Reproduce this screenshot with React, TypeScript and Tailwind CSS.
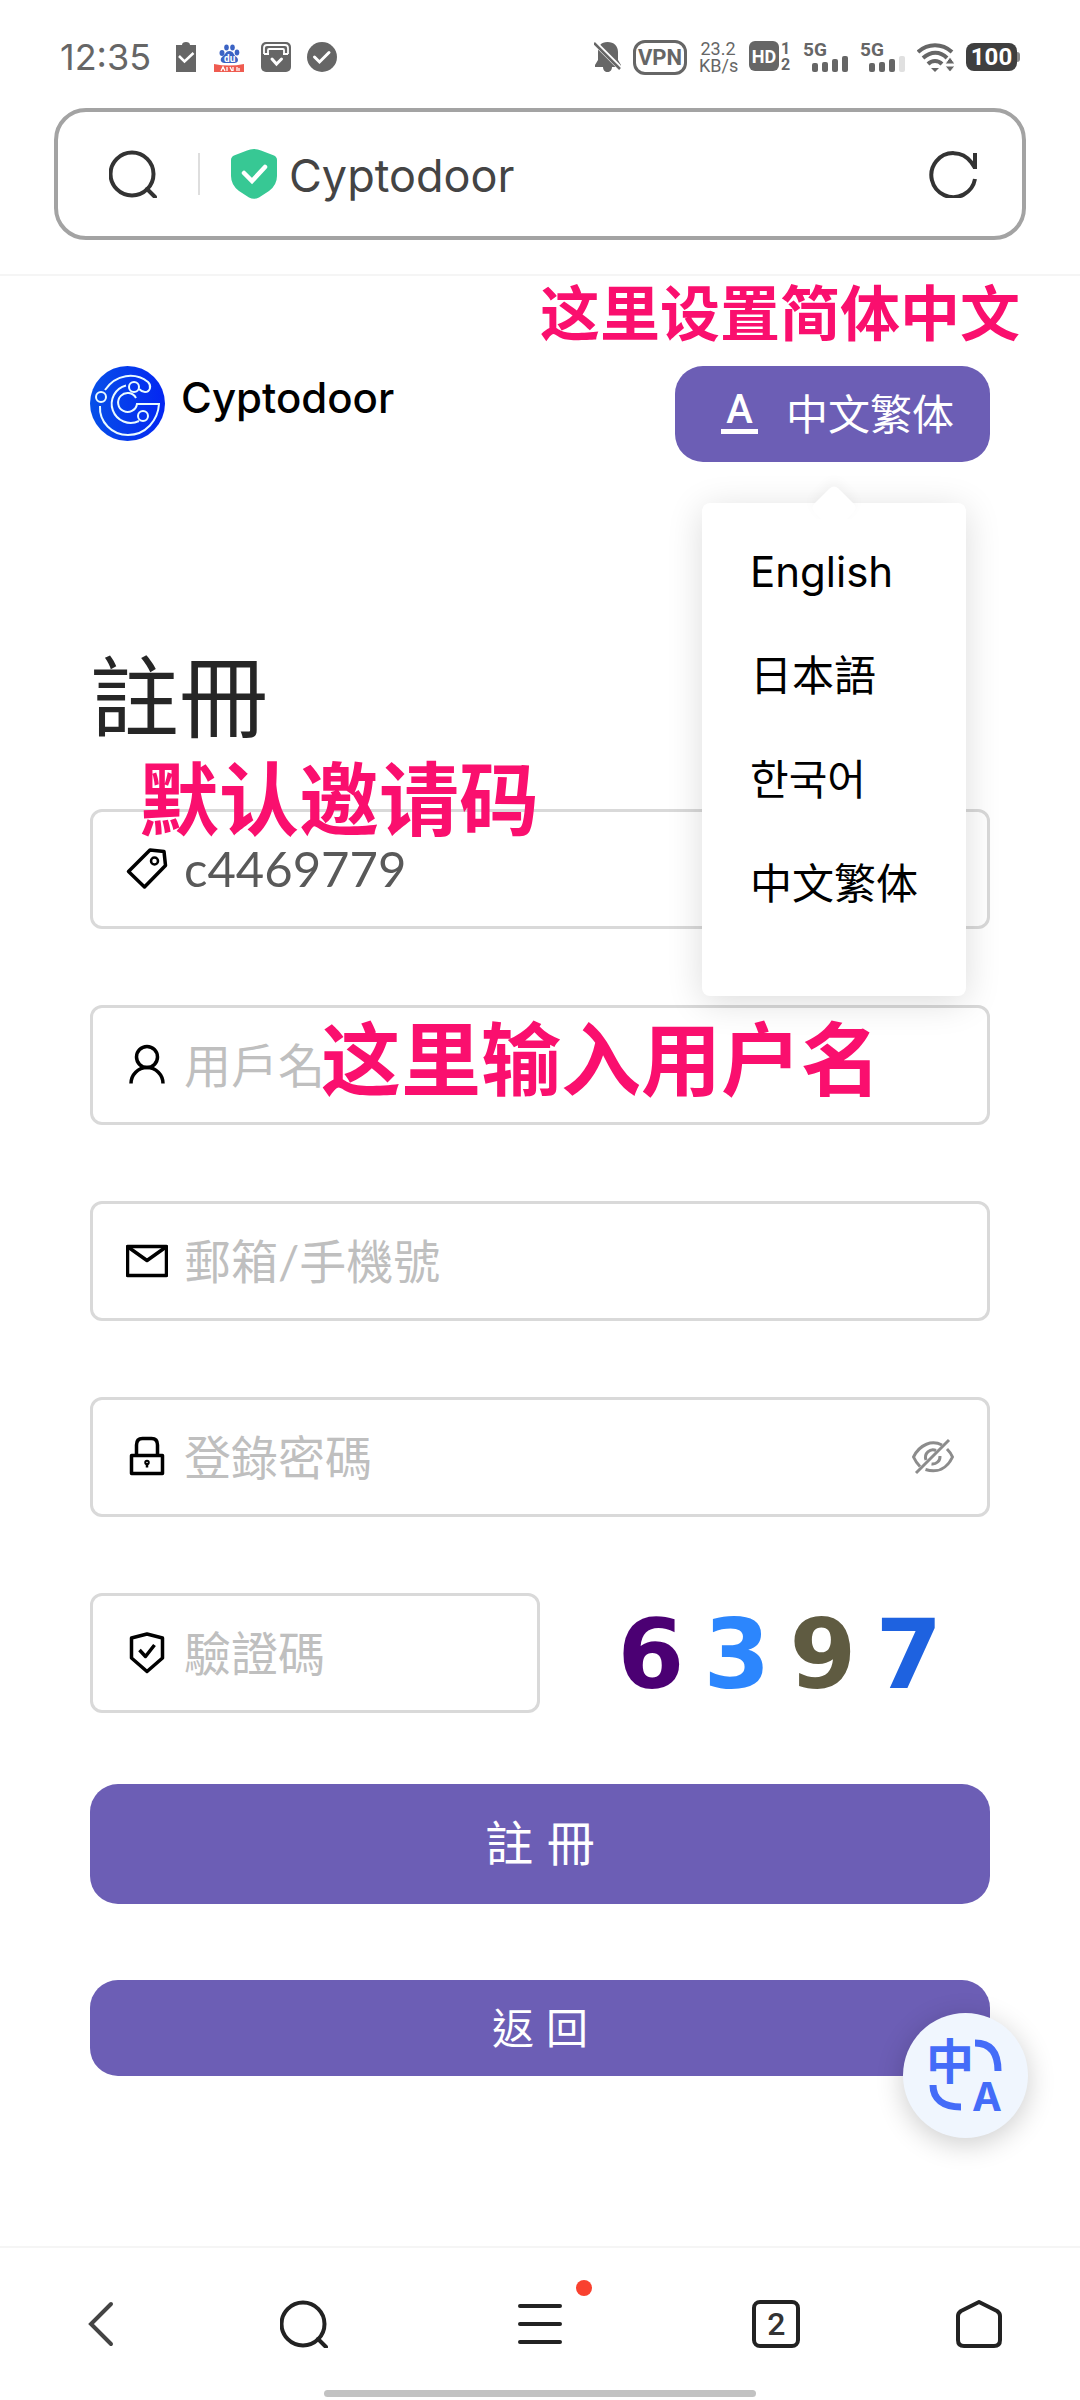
import React, { useState } from "react";

const languages = ["English", "日本語", "한국어", "中文繁体"];

const captcha = [
  { digit: "6", color: "text-[#4b0073]" },
  { digit: "3", color: "text-[#2c86fd]" },
  { digit: "9", color: "text-[#5f5b41]" },
  { digit: "7", color: "text-[#1e62e0]" },
];

const Signal = ({ weak = false }: { weak?: boolean }) => (
  <div className="relative h-[30px] w-[45px]">
    <span className="block font-[Roboto] text-[19px] leading-[15px] font-bold">
      5G
    </span>
    <svg className="absolute inset-0" viewBox="0 0 45 30" fill="currentColor">
      <rect x="9" y="21" width="6" height="9" rx="2" />
      <rect x="19" y="20" width="6" height="10" rx="2" />
      <rect x="29" y="17" width="6" height="13" rx="2" />
      <rect
        x="39"
        y="14"
        width="6"
        height="16"
        rx="2"
        fill={weak ? "#e0e0e0" : "currentColor"}
      />
    </svg>
  </div>
);

const StatusBar = () => (
  <div className="flex h-[108px] items-center justify-between px-[60px] pt-1.5 text-[#666]">
    <div className="flex items-center gap-4">
      <span className="mr-2 text-[36px] leading-none">12:35</span>
      <svg className="h-[30px] w-[22px]" viewBox="0 0 22 30">
        <path
          d="M1 3h6c0-2 1.500-3 4-3s4 1 4 3h6v27H1z"
          fill="currentColor"
        />
        <path
          d="M4 14l5.500 5.500L18.500 11"
          fill="none"
          stroke="#fff"
          strokeWidth="2.500"
        />
      </svg>
      <svg className="h-[30px] w-[32px]" viewBox="0 0 32 30">
        <g fill="#3b63c4">
          <ellipse cx="9" cy="11" rx="2.500" ry="3" />
          <ellipse cx="13.500" cy="5.500" rx="2.300" ry="3" />
          <ellipse cx="19.500" cy="5.500" rx="2.300" ry="3" />
          <ellipse cx="24" cy="10.500" rx="2.300" ry="3" />
          <path d="M16.500 9c4 0 4 4 7 6 3 3 1 6-2 6h-10c-4 0-5-4-2-6.500 3-2 3-5.500 7-5.500z" />
        </g>
        <text
          x="11"
          y="20"
          fill="#fff"
          fontSize="10"
          fontWeight="700"
          fontFamily="Roboto, sans-serif"
        >
          du
        </text>
        <path d="M1 22q15 3 30 0v8H1z" fill="#ef5b50" />
        <path
          d="M8 29l2-4 2 4M14 25v4M17 25l2 4M20 25v4M24 25v4M26 26v3"
          stroke="#fff"
          strokeWidth="1.300"
          fill="none"
        />
      </svg>
      <svg className="size-[30px]" viewBox="0 0 30 30">
        <rect width="30" height="30" rx="5" fill="currentColor" />
        <path
          d="M3 12V6q0-3 3-3h18q3 0 3 3v6M7 12V8q0-1 1-1h14q1 0 1 1v4M8 12H3M22 12h5"
          fill="none"
          stroke="#fff"
          strokeWidth="1.800"
        />
        <path
          d="M11 17l4.500 5 5-5"
          fill="none"
          stroke="#fff"
          strokeWidth="3"
          strokeLinecap="round"
        />
      </svg>
      <svg className="size-[30px]" viewBox="0 0 30 30">
        <circle cx="15" cy="15" r="15" fill="currentColor" />
        <path
          d="M7.500 15l5 5 9.500-9.500"
          fill="none"
          stroke="#fff"
          strokeWidth="3"
          strokeLinecap="round"
        />
      </svg>
    </div>

    <div className="flex items-center gap-3 font-[Roboto]">
      <svg className="h-[30px] w-[27px]" viewBox="0 0 27 30">
        <path
          d="M13.500 0C20 0 24 4 24 10v8l3 5v2H18c0 3-2 5-4.500 5S9 28 9 25H1v-2l3-5v-8C4 4 7 0 13.500 0z"
          fill="currentColor"
        />
        <path d="M0 0l27 27" stroke="#fff" strokeWidth="5" />
        <path d="M0 1l26 26" stroke="currentColor" strokeWidth="2.500" />
      </svg>
      <span className="flex h-[35px] w-[54px] items-center justify-center rounded-xl border-3 border-[#666] text-[22px] font-bold">
        VPN
      </span>
      <span className="w-[38px] text-center text-[18px] leading-[17px]">
        23.2
        <br />
        KB/s
      </span>
      <div className="flex gap-[2px] font-bold">
        <span className="flex size-[30px] items-center justify-center rounded-md bg-[#666] text-[18px] text-white">
          HD
        </span>
        <span className="w-[10px] text-[16px] leading-[16px]">
          1<br />2
        </span>
      </div>
      <Signal />
      <Signal weak />
      <svg className="h-[30px] w-[37px]" viewBox="0 0 37 30">
        <g fill="none" stroke="currentColor" strokeWidth="4">
          <path d="M1 10c10-9 24-9 34 0" />
          <path d="M6 16c8-7 17-7 24 0" />
          <path d="M11 22c4-4 10-4 14 0" />
        </g>
        <path d="M14 26h8l-4 4z" fill="currentColor" />
        <path
          d="M28 22l5-7 5 7zM28 24h10l-5 6z"
          fill="currentColor"
          stroke="#fff"
          strokeWidth="1"
        />
      </svg>
      <div className="flex items-center">
        <span className="flex h-[28px] w-[51px] items-center justify-center rounded-lg bg-[#3f3f3f] text-[24px] leading-[28px] font-bold text-white">
          100
        </span>
        <span className="h-2.5 w-[3px] rounded-r bg-[#888]" />
      </div>
    </div>
  </div>
);

const SearchIcon = () => (
  <svg
    className="size-12"
    viewBox="0 0 48 48"
    fill="none"
    stroke="currentColor"
    strokeWidth="4"
  >
    <circle cx="23" cy="24" r="21.500" />
    <path d="M38 39l8 8" strokeLinecap="round" />
  </svg>
);

const AddressBar = () => (
  <div className="mx-[54px] flex h-[132px] items-center rounded-[32px] border-4 border-[#a3a3a3] pr-[45px] pl-[51px] text-[#333]">
    <button aria-label="Search">
      <SearchIcon />
    </button>
    <span className="ml-[41px] h-[42px] w-[2px] bg-[#dedede]" />
    <svg className="ml-[31px] h-[50px] w-[46px]" viewBox="0 0 46 50">
      <path
        d="M23 0Q27 0 30 1.500L43 6.500Q46 8 46 11V27Q46 36 38 42L28 48.500Q23 51 18 48.500L8 42Q0 36 0 27V11Q0 8 3 6.500L16 1.500Q19 0 23 0z"
        fill="#37c894"
      />
      <path
        d="M13 24l8 8 13-14"
        fill="none"
        stroke="#fff"
        strokeWidth="4.500"
        strokeLinecap="round"
      />
    </svg>
    <span className="ml-3 flex-1 pt-1 text-[45px] text-[#444]">Cyptodoor</span>
    <button aria-label="Reload">
      <svg
        className="size-12"
        viewBox="0 0 48 48"
        fill="none"
        stroke="currentColor"
        strokeWidth="4"
      >
        <path d="M46 29A22 22 0 1 1 42 12l4 6" />
        <path d="M46 3v16" />
      </svg>
    </button>
  </div>
);

const Logo = () => (
  <svg className="size-[75px]" viewBox="0 0 75 75">
    <defs>
      <linearGradient id="logo-bg" x1="0" y1="0" x2="1" y2="0">
        <stop offset="0" stopColor="#0650e8" />
        <stop offset="1" stopColor="#0426f2" />
      </linearGradient>
    </defs>
    <circle cx="37.500" cy="37.500" r="37.500" fill="url(#logo-bg)" />
    <g fill="none" stroke="#e9fbff" strokeWidth="2">
      <path d="M15 24C26 8 45 6 58 16c4 4 2 10-3 10q-3 0-6-3" />
      <circle cx="44" cy="21" r="5" />
      <path d="M36 19.500A19 19 0 1 0 49 55" />
      <circle cx="53" cy="50" r="5" />
      <path d="M46 32A9.500 9.500 0 1 0 47 38H69C68 54 56 69 38 69 22 69 9 56 10 40" />
      <circle cx="11" cy="31" r="5" />
    </g>
  </svg>
);

const LanguageMenu = ({ onSelect }: { onSelect: (lang: string) => void }) => (
  <div className="absolute top-[137px] right-6 z-10 w-[264px] rounded-lg bg-white pt-4 pb-[61px] shadow-[0_6px_36px_rgba(0,0,0,0.14)]">
    <span className="absolute -top-3 left-1/2 size-[34px] -translate-x-1/2 rotate-45 rounded-md bg-white shadow-[-4px_-4px_12px_rgba(0,0,0,0.04)]" />
    <ul className="relative bg-white">
      {languages.map((lang) => (
        <li key={lang}>
          <button
            className="h-[104px] w-full pl-12 text-left text-[42px] text-black"
            onClick={() => onSelect(lang)}
          >
            {lang}
          </button>
        </li>
      ))}
    </ul>
  </div>
);

interface FieldProps {
  id: string;
  label: string;
  icon: React.ReactNode;
  type?: string;
  value?: string;
  className?: string;
  children?: React.ReactNode;
}

const Field = ({
  id,
  label,
  icon,
  type = "text",
  value,
  className = "w-full",
  children,
}: FieldProps) => (
  <div
    className={`relative flex h-[120px] items-center gap-4 rounded-xl border-3 border-[#d9d9d9] px-[33px] ${className}`}
  >
    <label htmlFor={id} className="text-black">
      <svg
        role="img"
        aria-label={label}
        className="size-[42px]"
        viewBox="0 0 42 42"
        fill="none"
        stroke="currentColor"
        strokeWidth="3.500"
        strokeLinejoin="round"
      >
        {icon}
      </svg>
    </label>
    <input
      id={id}
      type={type}
      defaultValue={value}
      placeholder={label}
      className="w-full min-w-0 flex-1 bg-transparent font-[Lato,'Noto_Sans_CJK_TC',sans-serif] text-[49px] text-[#595959] outline-none placeholder:text-[47px] placeholder:text-[#bfbfbf]"
    />
    {children}
  </div>
);

const tagIcon = (
  <>
    <path d="M2.500 23.500L24 2l14 1.500 1.500 14L18.500 39z" />
    <circle cx="28.500" cy="13" r="3.500" strokeWidth="2.500" />
  </>
);

const userIcon = (
  <>
    <circle cx="21" cy="13" r="10.500" />
    <path d="M5 39.500a16 16 0 0 1 32 0" />
  </>
);

const mailIcon = (
  <>
    <rect x="1.500" y="6.500" width="39" height="29" />
    <path d="M2 7l19 13.500L40 7" />
  </>
);

const lockIcon = (
  <>
    <rect x="5.500" y="19.500" width="31" height="18" />
    <path d="M10.500 19V9q0-6.500 6-6.500h9q6 0 6 6.500v10" />
    <circle cx="21" cy="26.500" r="1" />
    <path d="M21 27v4.500" strokeWidth="2.500" />
  </>
);

const shieldIcon = (
  <>
    <path d="M21 2l15.500 4v20L21 39.500 5.500 26V6z" />
    <path d="M13.500 18l6 6.500 9-11.500" />
  </>
);

// hand-made notes laid over the form
const Note = ({
  className,
  children,
}: {
  className: string;
  children: React.ReactNode;
}) => (
  <p
    className={`pointer-events-none absolute z-20 font-['Noto_Sans_CJK_SC',sans-serif] leading-none font-bold whitespace-nowrap text-[#fa0f6e] ${className}`}
  >
    {children}
  </p>
);

const BottomNav = () => (
  <nav className="relative grid h-[154px] grid-cols-[3fr_3fr_4fr_3fr_3fr] place-items-center border-t-2 border-[#f5f5f5] text-[#222]">
    <button aria-label="Back">
      <svg
        className="size-12"
        viewBox="0 0 48 48"
        fill="none"
        stroke="#444"
        strokeWidth="4"
        strokeLinecap="round"
      >
        <path d="M34 4L14 24l20 20" />
      </svg>
    </button>
    <button aria-label="Search">
      <SearchIcon />
    </button>
    <button aria-label="Menu" className="relative">
      <svg
        className="size-12"
        viewBox="0 0 48 48"
        stroke="currentColor"
        strokeWidth="4"
        strokeLinecap="round"
      >
        <path d="M4 6h40M4 24h40M4 42h40" />
      </svg>
      <span className="absolute -top-5 -right-7 size-4 rounded-full bg-[#f9412f]" />
    </button>
    <button
      aria-label="Tabs"
      className="flex size-12 items-center justify-center rounded-lg border-4 border-[#222] font-[Roboto] text-[32px] leading-10 font-medium text-[#333]"
    >
      2
    </button>
    <button aria-label="Home">
      <svg
        className="size-12"
        viewBox="0 0 48 48"
        fill="none"
        stroke="currentColor"
        strokeWidth="4"
        strokeLinejoin="round"
      >
        <path d="M24 2L42 11Q45 13 45 16V40Q45 46 39 46H9Q3 46 3 40V16Q3 13 6 11z" />
      </svg>
    </button>
    <span className="absolute bottom-[3px] left-[30%] h-[7px] w-[40%] rounded-full bg-[#c2c2c2]" />
  </nav>
);

const App = () => {
  const [language, setLanguage] = useState("中文繁体");

  return (
    <div className="flex min-h-screen flex-col bg-white font-[Inter,'Noto_Sans_CJK_TC','Noto_Sans_CJK_KR',sans-serif]">
      <header className="border-b-2 border-[#f5f5f5] pb-[34px]">
        <StatusBar />
        <AddressBar />
      </header>

      <main className="relative flex-1 px-[90px] pt-[90px]">
        <Note className="top-1 left-1/2 text-[60px]">这里设置简体中文</Note>

        <div className="relative flex h-24 items-start justify-between">
          <a href="#" className="flex gap-4">
            <Logo />
            <span className="text-[42px] leading-[64px] font-medium text-black">
              Cyptodoor
            </span>
          </a>
          <button className="flex h-24 items-center gap-7 rounded-[28px] bg-[#6c5eb5] pr-9 pl-[46px] text-[42px] text-white">
            <span className="w-[37px] border-b-5 border-white pb-1 text-center font-[Roboto] text-[40px] leading-[30px] font-medium">
              A
            </span>
            <span>{language}</span>
          </button>
          <LanguageMenu onSelect={setLanguage} />
        </div>

        <h1 className="mt-[188px] text-[89px] leading-[96px] text-[#262626]">
          註冊
        </h1>

        <form className="mt-[63px]" onSubmit={(e) => e.preventDefault()}>
          <div className="flex flex-col gap-[76px]">
            <Field id="invite" label="邀請碼" icon={tagIcon} value="c4469779">
              <Note className="-top-[58px] left-[46px] text-[80px]">
                默认邀请码
              </Note>
            </Field>
            <Field id="username" label="用戶名" icon={userIcon}>
              <Note className="top-1.5 left-[228px] text-[80px]">
                这里输入用户名
              </Note>
            </Field>
            <Field id="contact" label="郵箱/手機號" icon={mailIcon} />
            <Field
              id="password"
              label="登錄密碼"
              icon={lockIcon}
              type="password"
            >
              <button type="button" aria-label="Show password">
                <svg
                  className="size-[42px]"
                  viewBox="0 0 42 42"
                  fill="none"
                  stroke="#8c8c8c"
                  strokeWidth="3"
                >
                  <path d="M37 4L4 37" />
                  <path d="M30 9C20 4 8 8 1.500 21q2.500 5.500 6.500 9.500" />
                  <path d="M35 13q4 4 5.500 8C35 33 25 37 13.500 33.500" />
                  <path d="M24 14.500a7.500 7.500 0 0 0-10 9.500M28 20a7.500 7.500 0 0 1-8.500 8" />
                </svg>
              </button>
            </Field>
            <div className="flex items-center">
              <Field
                id="captcha"
                label="驗證碼"
                icon={shieldIcon}
                className="w-1/2"
              />
              <div className="flex flex-1 justify-center pt-1 pl-[30px]">
                {captcha.map(({ digit, color }) => (
                  <span
                    key={digit}
                    className={`w-[86px] text-center font-['DejaVu_Sans'] text-[96px] leading-[116px] font-bold ${color}`}
                  >
                    {digit}
                  </span>
                ))}
              </div>
            </div>
          </div>

          <div className="mt-[71px] flex flex-col gap-[76px]">
            <button
              type="submit"
              className="h-[120px] rounded-[28px] bg-[#6c5eb5] text-[48px] text-white"
            >
              註 冊
            </button>
            <button
              type="button"
              className="h-24 rounded-[28px] bg-[#6c5eb5] text-[42px] text-white"
            >
              返 回
            </button>
          </div>
        </form>

        <button
          aria-label="Translate"
          className="absolute right-[52px] bottom-[108px] flex size-[125px] items-center justify-center rounded-full bg-[#f0f6fe] shadow-[0_6px_28px_rgba(0,0,0,0.2)]"
        >
          <svg className="size-[74px] overflow-visible" viewBox="0 0 74 74">
            <g fill="none" stroke="#446cf8" strokeWidth="7">
              <path d="M46 4C62 4 69 14 69 32" />
              <path d="M4 46C4 60 14 68 32 68" />
            </g>
            <g fill="#446cf8" fontWeight="700">
              <text
                x="-3"
                y="40"
                fontSize="48"
                fontFamily="Noto Sans CJK SC, sans-serif"
              >
                中
              </text>
              <text x="43" y="72" fontSize="40" fontFamily="Inter, sans-serif">
                A
              </text>
            </g>
          </svg>
        </button>
      </main>

      <BottomNav />
    </div>
  );
};

export default App;
